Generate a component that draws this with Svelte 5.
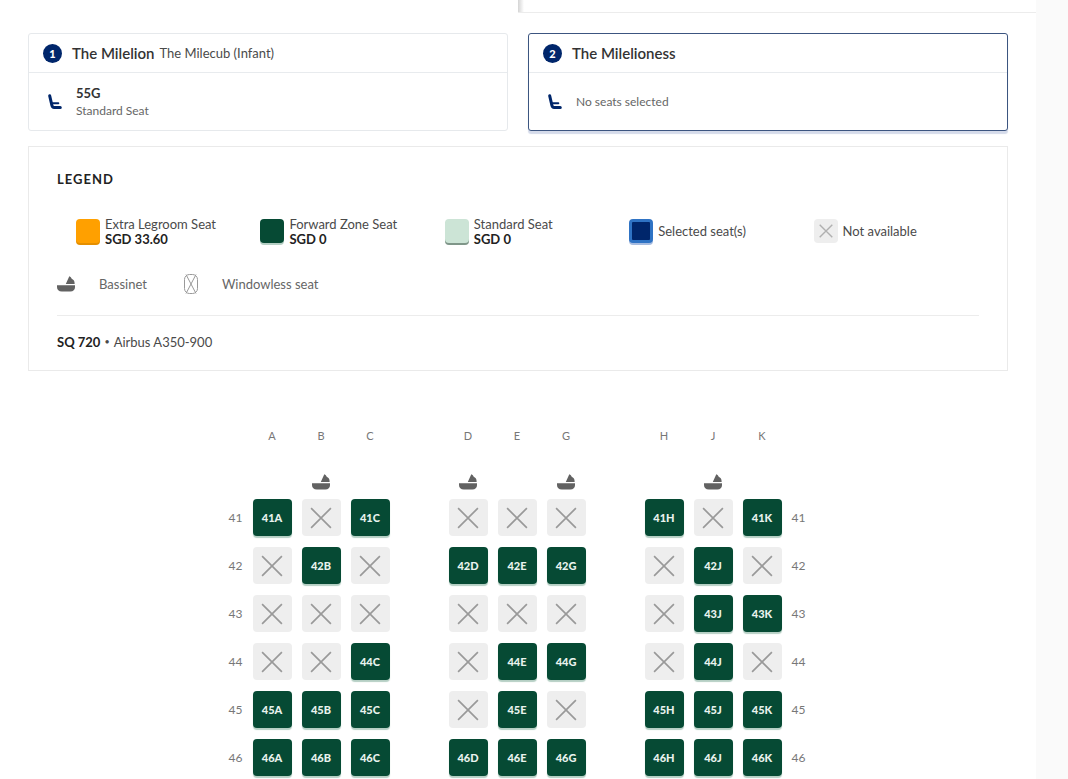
<script>
	const passengers = [
		{ id: 1, name: 'The Milelion', infant: 'The Milecub (Infant)', seat: '55G', type: 'Standard Seat' },
		{ id: 2, name: 'The Milelioness' }
	];

	const legend = [
		{ kind: 'extra', label: 'Extra Legroom Seat', price: 'SGD 33.60' },
		{ kind: 'forward', label: 'Forward Zone Seat', price: 'SGD 0' },
		{ kind: 'standard', label: 'Standard Seat', price: 'SGD 0' },
		{ kind: 'selected', label: 'Selected seat(s)' },
		{ kind: 'blocked', label: 'Not available' }
	];

	// an empty entry is an aisle
	const columns = ['A', 'B', 'C', '', 'D', 'E', 'G', '', 'H', 'J', 'K'];
	const bassinets = ['B', 'D', 'G', 'J'];

	const rows = [
		{ number: 41, free: 'ACHK' },
		{ number: 42, free: 'BDEGJ' },
		{ number: 43, free: 'JK' },
		{ number: 44, free: 'CEGJ' },
		{ number: 45, free: 'ABCEHJK' },
		{ number: 46, free: 'ABCDEGHJK' }
	];

	let active = 2;
</script>

{#snippet bassinet()}
	<svg viewBox="0 0 18 16" width="18" height="16" aria-hidden="true">
		<path fill="#626262" d="M0 9.2h18v2c0 2.600-1.800 4.300-4.600 4.300H4.800C1.900 15.500 0 13.800 0 11zM12.300.3c1.300.5 2 1.400 2.400 2.500 1.600.6 2.900 2.300 2.900 4.200v1H8.800z" />
	</svg>
{/snippet}

{#snippet cross()}
	<svg class="cross" viewBox="0 0 20 20" aria-hidden="true">
		<path d="M1 1l18 18M19 1L1 19" />
	</svg>
{/snippet}

<div class="page">
	<main>
		<div class="tabs">
			<div class="tab"></div>
			<div class="tab current"></div>
		</div>

		<div class="content">
			<div class="passengers">
				{#each passengers as p}
					<button class="passenger" class:active={active === p.id} on:click={() => (active = p.id)}>
						<span class="passenger-head">
							<span class="badge">{p.id}</span>
							<span class="name">{p.name}</span>
							{#if p.infant}
								<span class="infant">{p.infant}</span>
							{/if}
						</span>
						<span class="passenger-body">
							<svg viewBox="0 0 14 16" width="14" height="16" aria-hidden="true">
								<g fill="none" stroke="#00266b" stroke-linecap="round" stroke-linejoin="round">
									<path stroke-width="3" d="M1.700 1.800l2.200 9.500c.3 1.600 1 2.200 2.200 2.200h6.200" />
									<path stroke-width="2" d="M4.500 9.300h5.800" />
								</g>
							</svg>
							<span class="choice">
								{#if p.seat}
									<strong>{p.seat}</strong>
									<span>{p.type}</span>
								{:else}
									<span>No seats selected</span>
								{/if}
							</span>
						</span>
					</button>
				{/each}
			</div>

			<section class="legend">
				<h2>LEGEND</h2>
				<ul class="kinds">
					{#each legend as item}
						<li>
							<span class="swatch {item.kind}">
								{#if item.kind === 'blocked'}{@render cross()}{/if}
							</span>
							<span class="kind-text" class:priced={item.price}>
								{item.label}
								{#if item.price}<strong>{item.price}</strong>{/if}
							</span>
						</li>
					{/each}
				</ul>
				<div class="features">
					<span class="feature">{@render bassinet()}Bassinet</span>
					<span class="feature">
						<svg viewBox="0 0 14 20" width="14" height="20" aria-hidden="true">
							<g fill="none" stroke="#999">
								<rect x="0.5" y="0.5" width="13" height="19" rx="5" />
								<path d="M2 0.500l10 19M12 0.500l-10 19" />
							</g>
						</svg>
						Windowless seat
					</span>
				</div>
				<p class="flight">
					<strong>SQ 720</strong>
					<span class="dot">•</span>
					<span>Airbus A350-900</span>
				</p>
			</section>

			<div class="seat-map">
				<span></span>
				{#each columns as col}
					<span class="column">{col}</span>
				{/each}
				<span></span>

				<span></span>
				{#each columns as col}
					<span class="marker">
						{#if bassinets.includes(col)}{@render bassinet()}{/if}
					</span>
				{/each}
				<span></span>

				{#each rows as row}
					<span class="row-number">{row.number}</span>
					{#each columns as col}
						{#if !col}
							<span></span>
						{:else if row.free.includes(col)}
							<button class="seat">{row.number}{col}</button>
						{:else}
							<button class="seat blocked" disabled aria-label="{row.number}{col} not available">
								{@render cross()}
							</button>
						{/if}
					{/each}
					<span class="row-number end">{row.number}</span>
				{/each}
			</div>
		</div>
	</main>
</div>

<style>
	:global(body) {
		margin: 0;
		background: #fafafa;
	}

	.page {
		min-height: 100vh;
		padding-right: 32px;
		display: flex;
		font-family: Lato, 'Liberation Sans', sans-serif;
		font-size: 13px;
		line-height: 16px;
		color: #4a4a4a;
	}

	main {
		flex: 1;
		background: #fff;
	}

	button {
		font: inherit;
		color: inherit;
		border: none;
		padding: 0;
		cursor: pointer;
	}

	strong {
		color: #222;
	}

	.tabs {
		display: grid;
		grid-template-columns: 1fr 1fr;
		height: 13px;
	}

	.tab.current {
		box-sizing: border-box;
		border-bottom: 1px solid #ececec;
		background: linear-gradient(to right, #d4d4d4, #fff 6px);
	}

	.content {
		padding: 20px 28px 0;
	}

	.passengers {
		display: grid;
		grid-template-columns: 1fr 1fr;
		gap: 20px;
	}

	.passenger {
		background: #fff;
		border: 1px solid #e6e9ec;
		border-radius: 3px;
		text-align: left;
	}

	.passenger.active {
		border-color: #3c5580;
		box-shadow: 0 3px 1px #d5dbea;
	}

	.passenger-head {
		display: flex;
		align-items: center;
		height: 38px;
		padding-left: 14px;
		border-bottom: 1px solid #e8ebee;
	}

	.badge {
		width: 19px;
		height: 19px;
		line-height: 19px;
		margin-right: 10px;
		border-radius: 50%;
		background: #00266b;
		color: #fff;
		font-size: 11px;
		font-weight: 900;
		text-align: center;
	}

	.name {
		font-size: 15px;
		font-weight: 600;
		color: #333;
		margin-right: 5px;
	}

	.passenger-body {
		display: flex;
		align-items: center;
		gap: 14px;
		height: 57px;
		padding-left: 19px;
	}

	.choice {
		display: grid;
		gap: 2px;
		font-size: 12px;
		color: #666;
	}

	.choice strong {
		font-size: 13px;
		color: #333;
	}

	.legend {
		margin-top: 15px;
		padding: 24px 28px 20px;
		border: 1px solid #eaeaea;
	}

	h2 {
		margin: 0;
		font-size: 13px;
		letter-spacing: 1px;
		color: #222;
	}

	.kinds {
		list-style: none;
		margin: 28px 0 0;
		padding: 0;
		display: grid;
		grid-template-columns: repeat(5, 1fr);
	}

	.kinds li {
		display: flex;
		align-items: center;
		gap: 5px;
		height: 32px;
		padding-left: 19px;
	}

	.kind-text {
		line-height: 15px;
	}

	.kind-text.priced {
		align-self: flex-end;
	}

	.kind-text strong {
		display: block;
	}

	.swatch {
		box-sizing: border-box;
		width: 24px;
		height: 24px;
		border-radius: 4px;
		display: grid;
		place-items: center;
	}

	.extra {
		background: #ffa000;
		box-shadow: 0 2px #e58f00;
	}

	.forward {
		background: #064a34;
		box-shadow: 0 2px #b5cfc4;
	}

	.standard {
		background: #cce4d6;
		box-shadow: 0 2px #7f9689;
	}

	.selected {
		background: #00266b;
		border: 3px solid #2f73c4;
		box-shadow: 0 2px #a5bbe0;
	}

	.blocked {
		background: #eee;
	}

	.cross {
		width: 22px;
		height: 22px;
		fill: none;
		stroke: #999;
		stroke-width: 1.5;
	}

	.swatch .cross {
		width: 14px;
		height: 14px;
		stroke: #b0b0b0;
		stroke-width: 2;
	}

	.features {
		display: flex;
		gap: 37px;
		align-items: center;
		margin-top: 27px;
		padding-bottom: 21px;
		border-bottom: 1px solid #ececec;
		color: #666;
	}

	.feature {
		display: flex;
		align-items: center;
		gap: 24px;
	}

	.flight {
		display: flex;
		gap: 4px;
		margin: 18px 0 0;
	}

	.dot {
		font-size: 9px;
	}

	.seat-map {
		display: grid;
		grid-template-columns: 14px repeat(11, 39px) 14px;
		grid-template-rows: 35px 14px;
		grid-auto-rows: 37px;
		gap: 11px 10px;
		justify-content: center;
		margin-top: 57px;
		padding-right: 2px;
	}

	.column {
		font-size: 11px;
		color: #777;
		text-align: center;
	}

	.marker {
		display: grid;
		place-items: center;
	}

	.row-number {
		font-size: 12px;
		line-height: 38px;
		color: #777;
	}

	.row-number.end {
		text-align: right;
	}

	.seat {
		display: grid;
		place-items: center;
		border-radius: 4px;
		background: #064a34;
		color: #e9f3ee;
		font-size: 11px;
		font-weight: 900;
		box-shadow: 0 2px 1px #b5cfc4;
	}

	.seat.blocked {
		background: #eee;
		box-shadow: none;
		cursor: default;
	}
</style>
